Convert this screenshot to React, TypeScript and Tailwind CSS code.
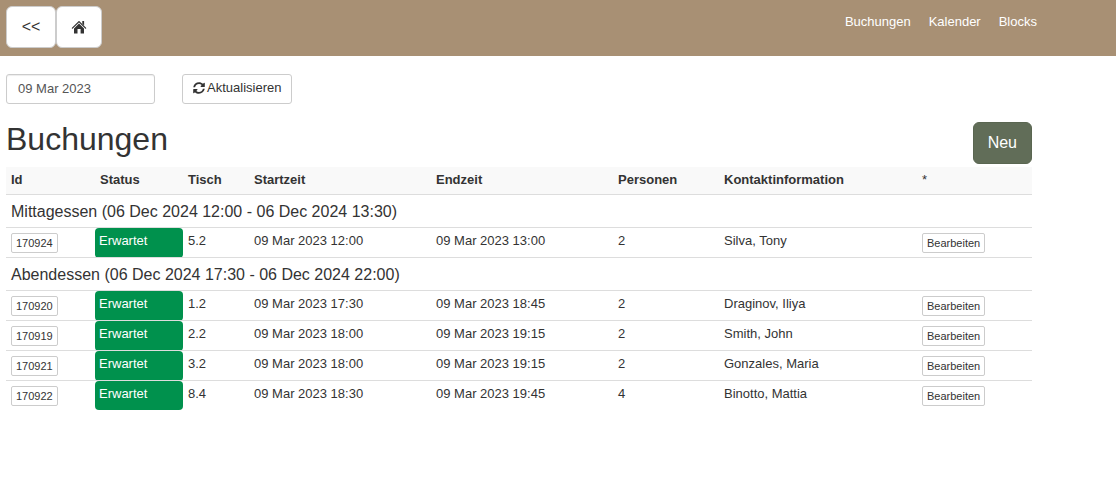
import React, { useState } from 'react';
import { FaSyncAlt } from 'react-icons/fa';

interface Booking {
  id: string;
  table: string;
  start: string;
  end: string;
  persons: number;
  contact: string;
}

interface Section {
  title: string;
  bookings: Booking[];
}

const navItems = ['Buchungen', 'Kalender', 'Blocks'];

const columns = [
  { label: 'Id', width: 'w-[89px]' },
  { label: 'Status', width: 'w-[88px]' },
  { label: 'Tisch', width: 'w-[66px]' },
  { label: 'Startzeit', width: 'w-[182px]' },
  { label: 'Endzeit', width: 'w-[182px]' },
  { label: 'Personen', width: 'w-[106px]' },
  { label: 'Kontaktinformation', width: 'w-[198px]' },
  { label: '*', width: 'w-[115px]' },
];

const sections: Section[] = [
  {
    title: 'Mittagessen (06 Dec 2024 12:00 - 06 Dec 2024 13:30)',
    bookings: [
      { id: '170924', table: '5.2', start: '09 Mar 2023 12:00', end: '09 Mar 2023 13:00', persons: 2, contact: 'Silva, Tony' },
    ],
  },
  {
    title: 'Abendessen (06 Dec 2024 17:30 - 06 Dec 2024 22:00)',
    bookings: [
      { id: '170920', table: '1.2', start: '09 Mar 2023 17:30', end: '09 Mar 2023 18:45', persons: 2, contact: 'Draginov, Iliya' },
      { id: '170919', table: '2.2', start: '09 Mar 2023 18:00', end: '09 Mar 2023 19:15', persons: 2, contact: 'Smith, John' },
      { id: '170921', table: '3.2', start: '09 Mar 2023 18:00', end: '09 Mar 2023 19:15', persons: 2, contact: 'Gonzales, Maria' },
      { id: '170922', table: '8.4', start: '09 Mar 2023 18:30', end: '09 Mar 2023 19:45', persons: 4, contact: 'Binotto, Mattia' },
    ],
  },
];

const HomeIcon: React.FC = () => (
  <svg viewBox="0 0 16 14" className="w-4 h-3.5" aria-hidden="true">
    <path
      d="M8 1.6 L14.6 8.1 M8 1.6 L1.4 8.1"
      fill="none"
      stroke="currentColor"
      strokeWidth="1.3"
      strokeLinecap="round"
    />
    <path d="M11.3 1h1.8v4.6l-1.8-1.8z" fill="currentColor" />
    <path d="M8 3.6l5 5V13.4H9.6V9H6.5v4.4H3V8.6z" fill="currentColor" />
  </svg>
);

const SmallButton: React.FC<{ children: React.ReactNode }> = ({ children }) => (
  <button type="button" className="block h-5 px-1 rounded-xs border border-[#ccc] bg-white text-[11px] leading-4 hover:bg-gray-100">
    {children}
  </button>
);

const BookingRow: React.FC<{ booking: Booking }> = ({ booking }) => (
  <tr className="border-t border-[#ddd] align-top">
    <td className="px-[5px] pt-[5px] pb-1"><SmallButton>{booking.id}</SmallButton></td>
    <td className="px-1 py-1 rounded bg-[#00914d] text-white">Erwartet</td>
    <td className="px-[5px] py-1">{booking.table}</td>
    <td className="px-[5px] py-1">{booking.start}</td>
    <td className="px-[5px] py-1">{booking.end}</td>
    <td className="px-[5px] py-1">{booking.persons}</td>
    <td className="px-[5px] py-1">{booking.contact}</td>
    <td className="px-[5px] pt-[5px] pb-1"><SmallButton>Bearbeiten</SmallButton></td>
  </tr>
);

export default function App() {
  const [date, setDate] = useState('09 Mar 2023');

  return (
    <div className="min-h-screen bg-white font-['Liberation_Sans',Arial,sans-serif] text-[13px] leading-[18px] text-[#333]">
      <header className="h-14 bg-[#a89074]">
        <div className="flex justify-between max-w-[1037px] pl-1.5 pt-1.5">
          <div className="flex">
            <button type="button" className="w-[50px] h-[42px] rounded-md border border-[#ccc] bg-white text-base">&lt;&lt;</button>
            <button type="button" aria-label="Start" className="flex items-center justify-center w-[46px] h-[42px] rounded-md border border-[#ccc] bg-white">
              <HomeIcon />
            </button>
          </div>
          <nav className="flex gap-[18px] pt-[7px]">
            {navItems.map((item) => (
              <a key={item} href="#" className="text-white hover:underline">{item}</a>
            ))}
          </nav>
        </div>
      </header>

      <main className="max-w-[1038px] px-1.5 pt-[18px]">
        <form className="flex gap-[27px]" onSubmit={(e) => e.preventDefault()}>
          <input
            type="text"
            aria-label="Datum"
            value={date}
            onChange={(e) => setDate(e.target.value)}
            className="w-[149px] h-[30px] px-[11px] pb-0.5 rounded-[3px] border border-[#ccc] bg-white text-[#555] shadow-[inset_0_1px_1px_rgba(0,0,0,0.075)] outline-none focus:border-blue-400"
          />
          <button type="submit" className="flex items-center gap-0.5 h-[30px] px-2.5 pb-0.5 rounded-[3px] border border-[#ccc] bg-white">
            <FaSyncAlt className="size-3" />
            Aktualisieren
          </button>
        </form>

        <div className="flex justify-between pt-[18px]">
          <h1 className="text-[32px] leading-[34px]">Buchungen</h1>
          <button type="button" className="h-[42px] px-3.5 rounded-md border border-[#5a6651] bg-[#616d58] text-base text-white">Neu</button>
        </div>

        <table className="w-full mt-[3px] table-fixed border-collapse">
          <thead>
            <tr className="bg-[#f9f9f9] text-left">
              {columns.map((column) => (
                <th
                  key={column.label}
                  className={`${column.width} px-[5px] pt-1 pb-[5px] ${column.label === '*' ? 'font-normal' : 'font-bold'}`}
                >
                  {column.label}
                </th>
              ))}
            </tr>
          </thead>
          {sections.map((section) => (
            <tbody key={section.title}>
              <tr className="border-t border-[#ddd]">
                <th colSpan={columns.length} className="px-[5px] pt-[7px] pb-[5px] text-left text-base leading-5 font-normal">{section.title}</th>
              </tr>
              {section.bookings.map((booking) => (
                <BookingRow key={booking.id} booking={booking} />
              ))}
            </tbody>
          ))}
        </table>
      </main>
    </div>
  );
}
